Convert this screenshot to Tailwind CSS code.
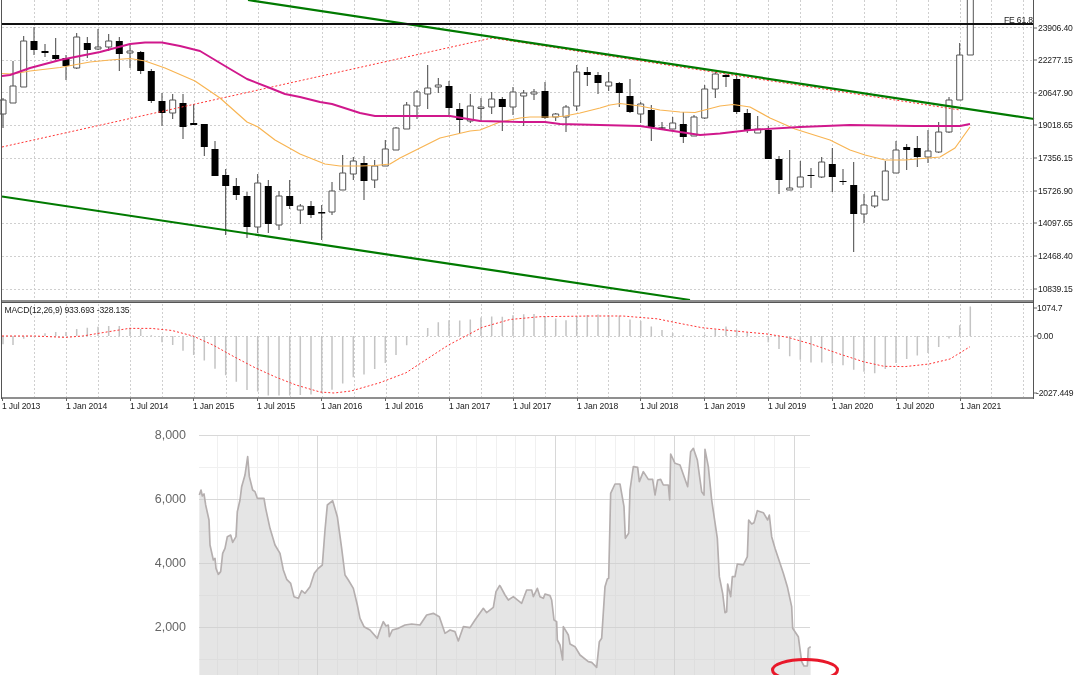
<!DOCTYPE html>
<html>
<head>
<meta charset="utf-8">
<script src="https://cdn.jsdelivr.net/npm/@tailwindcss/browser@4"></script>
</head>
<body class="bg-white">
<div class="flex flex-col w-[1080px] h-[675px] overflow-hidden bg-white font-['Liberation_Sans',sans-serif]">

<svg class="block w-[1080px] h-[420px] shrink-0 blur-[0.35px]" viewBox="0 0 1080 420" fill="none">
  <!-- grid -->
  <path stroke="#cfcfcf" stroke-dasharray="2 2" d="M34.5 0V398M66.5 0V398M98.5 0V398M130.5 0V398M162.5 0V398M194.5 0V398M226.5 0V398M258.5 0V398M290.5 0V398M322.5 0V398M354.5 0V398M386.5 0V398M418.5 0V398M449.5 0V398M481.5 0V398M513.5 0V398M545.5 0V398M577.5 0V398M608.5 0V398M640.5 0V398M672.5 0V398M704.5 0V398M736.5 0V398M768.5 0V398M800.5 0V398M832.5 0V398M864.5 0V398M896.5 0V398M928.5 0V398M960.5 0V398M991.5 0V398M1023.5 0V398M2 27.5H1034M2 60.5H1034M2 92.5H1034M2 125.5H1034M2 158.5H1034M2 191.5H1034M2 223.5H1034M2 256.5H1034M2 289.5H1034M2 336.5H1034"/>

  <!-- wicks -->
  <path stroke="#444" d="M3 98V128M13 61V103M23.7 36V87M34 27V55M45 44V57M55.7 38V60M66 55V80M76.7 33V69M87.3 37V58M98 29V50M108.7 34V51M119.3 37V71M130 45V68M140.7 51V74M151.3 69V103M162 93V126M172.7 94V119M183 94V139M193.7 104V124M204.3 124V156M215 141V176M225.7 169V235M236.3 178V200M247 192V238M257.7 174V233M268.3 180V233M279 191V230M289.7 180V209M300.3 204V224M311 201V218M321.7 205V240M332 182V215M342.7 155V190M353.3 157V180M364 156V200M374.7 160V188M385.3 140V166M396 127V150M406.7 102V129M417 90V119M427.7 65V109M438.3 78V93M449 81V115M459.7 103V133M470.3 94V123M481 98V121M491.7 92V114M502.3 97V131M513 87V115M523.7 90V126M534 89V100M545 82V119M555.7 113V121M566 105V132M576.7 65V111M587.3 67V86M598 72V94M608.7 72V91M619.3 82V107M630 79V113M640.7 102V123M651.3 105V141M662 122V129M672.7 117V129M683.3 112V143M694 115V136M704.7 85V119M715.3 72V98M726 74V87M736.7 76V114M747.3 109V133M757.7 116V133M768.3 126V159M779 156V194M789.7 150V190M800.3 161V187M811 168V188M821.7 157V178M832.3 148V192M843 169V185M853.7 162V252M864 194V223M874.7 191V208M885.3 161V200M896 141V173M906.7 144V170M917.3 136V167M928 130V163M938.7 122V153M949 97V133M959.7 43V100M970.3 0V55"/>

  <!-- white bodies -->
  <path fill="#fff" stroke="#555" d="M0 100h6V114h-6zM10 86h6V103h-6zM20.7 41h6V87h-6zM73.7 37h6V68h-6zM95 47h6V49h-6zM105.7 41h6V47h-6zM127 51h6V53h-6zM169.7 100h6V113h-6zM254.7 183h6V227h-6zM276 196h6V225h-6zM297.3 206h6V210h-6zM329 191h6V212h-6zM339.7 173h6V190h-6zM350.3 161h6V174h-6zM371.7 166h6V180h-6zM382.3 149h6V166h-6zM393 128h6V150h-6zM403.7 105h6V129h-6zM414 92h6V106h-6zM424.7 88h6V94h-6zM435.3 85h6V87h-6zM467.3 106h6V121h-6zM478 107h6V108.5h-6zM488.7 99h6V107h-6zM510 92h6V107h-6zM520.7 93h6V96h-6zM531 92h6V94h-6zM552.7 114h6V117h-6zM563 107h6V117h-6zM573.7 72h6V106h-6zM605.7 82h6V86h-6zM637.7 104h6V114h-6zM669.7 123h6V129h-6zM691 117h6V136h-6zM701.7 89h6V118h-6zM712.3 74h6V89h-6zM754.7 129h6V133h-6zM786.7 188h6V190h-6zM797.3 177h6V187h-6zM818.7 162h6V177h-6zM861 205h6V214h-6zM871.7 196h6V206h-6zM882.3 171h6V200h-6zM893 150h6V173h-6zM925 151h6V157h-6zM935.7 132h6V152h-6zM946 100h6V132h-6zM956.7 55h6V100h-6zM967.3 -2h6V55h-6z"/>

  <!-- black bodies -->
  <path stroke="#000" stroke-width="7" d="M34 41V50M45 51V53M55.7 55V59M66 58V66M87.3 43V50M119.3 41V54M140.7 52V71M151.3 71V101M162 101V113M183 103V127M193.7 123V125M204.3 124V147M215 149V176M225.7 175V186M236.3 186V195M247 196V227M268.3 186V224M289.7 196V206M311 206V215M321.7 212V213.5M364 163V181M449 86V108M459.7 109V120M502.3 99V107M545 91V118M587.3 72V75M598 75V83M619.3 83V93M630 96V112M651.3 110V127M662 127.5V128.5M683.3 124V137M726 75V77M736.7 79V112M747.3 113V131M768.3 130V159M779 159V180M811 175V176M832.3 164V177M843 181V182M853.7 185V214M906.7 147V150M917.3 148V157"/>

  <!-- channel and levels -->
  <path stroke="#f33" stroke-dasharray="2 2" d="M2 147L492 38L960 110"/>
  <path stroke="#007a00" stroke-width="2.2" d="M248 0L1034 119M2 196.5L690 300"/>
  <path stroke="#111" stroke-width="2" d="M2 24H1034"/>

  <!-- moving averages -->
  <path stroke="#f8b452" stroke-width="1.2" stroke-linejoin="round" d="M2 73.5L12 74L30 71L60 67.5L90 62L110 60L130 58.5L145 61L165 68L195 81L220 98L247 122L258 127L275 140L300 154L325 164L340 166L360 166L375 165.5L390 164L400 158L420 148L440 138L470 131L480 130L500 122L520 118L530 117L555 117L565 116L580 113L600 108L610 105L620 103.5L640 106L660 110L680 112L695 112.5L720 106L733 104.5L750 107L770 118L795 129L830 140L850 150L865 155L885 160L905 160L940 157L955 148L970 127"/>
  <path stroke="#d0188c" stroke-width="1.9" stroke-linejoin="round" d="M2 76L10 75L30 68L60 60L100 52L130 44L145 42.5L162 42.5L180 46L200 51L225 66L247 79L270 88L285 94L300 97L320 102L332 104L360 113L375 116L450 116L480 121L520 122L545 122L560 124L600 125L640 126L660 129L680 132L700 135L720 133.5L750 130L800 127L850 125L915 126L960 126L970 124"/>

  <!-- MACD histogram -->
  <path stroke="#c4c4c4" stroke-width="1.5" d="M3 336V344.3M13 336V345M23.7 336V338.8M34 336V336.7M45 336V333.2M55.7 336V331.9M66 336V331.9M76.7 336V329.1M87.3 336V327.7M98 336V326.7M108.7 336V326M119.3 336V326M130 336V327.7M140.7 336V329.1M151.3 336V335.3M162 336V342.2M172.7 336V345M183 336V350.8M193.7 336V354.9M204.3 336V360.4M215 336V368.7M225.7 336V375.3M236.3 336V381.8M247 336V390M257.7 336V391.4M268.3 336V395.6M279 336V395.6M289.7 336V395.6M300.3 336V394.9M311 336V394.5M321.7 336V393.2M332 336V389.7M342.7 336V383.5M353.3 336V377.3M364 336V374.6M374.7 336V369M385.3 336V362.9M396 336V354.9M406.7 336V345.3M417 336V336.7M427.7 336V328M438.3 336V322.2M449 336V320.2M459.7 336V320.5M470.3 336V319.5M481 336V317.4M491.7 336V316.4M502.3 336V316.7M513 336V315.3M523.7 336V314.3M534 336V314M545 336V316.7M555.7 336V318.4M566 336V320.2M576.7 336V316.7M587.3 336V315M598 336V314.6M608.7 336V315.3M619.3 336V315.7M630 336V319.5M640.7 336V320.9M651.3 336V326.4M662 336V330.1M672.7 336V332.9M683.3 336V335.3M694 336V335.7M704.7 336V334.6M715.3 336V329.5M726 336V326.4M736.7 336V329.8M747.3 336V332.6M768.3 336V342.2M779 336V349.1M789.7 336V356.3M800.3 336V359.8M811 336V362.5M821.7 336V362.5M832.3 336V363.5M843 336V365.3M853.7 336V369.7M864 336V371.8M874.7 336V373.2M885.3 336V369M896 336V362.9M906.7 336V359.1M917.3 336V355.6M928 336V352.9M938.7 336V347M949 336V338.4M959.7 336V325.3M970.3 336V306.4"/>
  <path stroke="#f33" stroke-dasharray="2 2" d="M2 336L34.4 336L65.4 337.4L82.6 336L103 332.6L129 328.4L151.5 328.4L172 330.5L193 336L213.5 345.3L234 356.7L255 367.7L275.5 377L296 385L320 392L334 393L351 391L379 383L406 372.8L427 359L448 345.3L482 327.4L510 319.5L540 316.7L591.7 316L622.6 316L657 318.8L677.7 323L702 327.7L733 330.8L767 334L788 337.4L812 344.3L839.6 354L863.7 361.8L884 366.3L905 366.6L929 364L950 359L970 346.7"/>

  <!-- frame -->
  <path stroke="#8f8f8f" stroke-width="2" d="M1 301H1034M1 398H1034"/>
  <path stroke="#555" d="M1.5 0V399M1033.5 0V399M2 302.5H1034"/>
  <path stroke="#666" d="M1034 28H1037M1034 60H1037M1034 93H1037M1034 125H1037M1034 158H1037M1034 191H1037M1034 223H1037M1034 256H1037M1034 289H1037M1034 308H1037M1034 336H1037M1034 393H1037M2.5 398V401M66.5 398V401M130.5 398V401M193.5 398V401M257.5 398V401M321.5 398V401M385.5 398V401M449.5 398V401M513.5 398V401M577.5 398V401M640.5 398V401M704.5 398V401M768.5 398V401M832.5 398V401M896.5 398V401M960.5 398V401"/>

  <!-- labels -->
  <g class="fill-[#222] text-[8.6px] tracking-[-0.15px]" dominant-baseline="central">
    <text x="1038" y="28">23906.40</text>
    <text x="1038" y="60">22277.15</text>
    <text x="1038" y="93">20647.90</text>
    <text x="1038" y="125">19018.65</text>
    <text x="1038" y="158">17356.15</text>
    <text x="1038" y="191">15726.90</text>
    <text x="1038" y="223">14097.65</text>
    <text x="1038" y="256">12468.40</text>
    <text x="1038" y="289">10839.15</text>
    <text x="1037" y="308">1074.7</text>
    <text x="1037" y="336">0.00</text>
    <text x="1036" y="393">-2027.449</text>
    <text x="1033" y="19.5" text-anchor="end">FE 61.8</text>
    <text x="4.5" y="310">MACD(12,26,9) 933.693 -328.135</text>
    <text x="2" y="405.5">1 Jul 2013</text>
    <text x="66" y="405.5">1 Jan 2014</text>
    <text x="130" y="405.5">1 Jul 2014</text>
    <text x="193" y="405.5">1 Jan 2015</text>
    <text x="257" y="405.5">1 Jul 2015</text>
    <text x="321" y="405.5">1 Jan 2016</text>
    <text x="385" y="405.5">1 Jul 2016</text>
    <text x="449" y="405.5">1 Jan 2017</text>
    <text x="513" y="405.5">1 Jul 2017</text>
    <text x="577" y="405.5">1 Jan 2018</text>
    <text x="640" y="405.5">1 Jul 2018</text>
    <text x="704" y="405.5">1 Jan 2019</text>
    <text x="768" y="405.5">1 Jul 2019</text>
    <text x="832" y="405.5">1 Jan 2020</text>
    <text x="896" y="405.5">1 Jul 2020</text>
    <text x="960" y="405.5">1 Jan 2021</text>
  </g>
</svg>

<svg class="block w-[1080px] h-[255px] shrink-0 blur-[0.3px]" viewBox="0 420 1080 255" fill="none">
  <path stroke="#f0f0f0" d="M217.5 435V675M237.5 435V675M257.5 435V675M278.5 435V675M298.5 435V675M337.5 435V675M357.5 435V675M376.5 435V675M396.5 435V675M416.5 435V675M456.5 435V675M476.5 435V675M496.5 435V675M515.5 435V675M535.5 435V675M575.5 435V675M595.5 435V675M615.5 435V675M634.5 435V675M654.5 435V675M694.5 435V675M714.5 435V675M734.5 435V675M754.5 435V675M774.5 435V675M199 467.5H810M199 531.5H810M199 595.5H810M199 659.5H810"/>
  <path stroke="#d8d8d8" d="M317.5 435V675M436.5 435V675M555.5 435V675M674.5 435V675M794.5 435V675M199 435.5H810M199 499.5H810M199 563.5H810M199 627.5H810"/>

  <g transform="translate(140 420) scale(0.33333)">
    <path fill="#cfcfcf" fill-opacity="0.55" d="M178 225L183 210L187 228L192 222L197 255L207 300L210 375L220 420L225 415L228 445L235 463L242 455L248 400L255 385L262 350L272 345L278 367L288 350L292 275L300 240L305 200L315 165L323 110L328 170L338 210L345 215L352 235L372 235L377 265L390 325L405 375L420 400L430 450L440 478L452 490L462 530L475 535L485 512L495 520L510 500L523 460L535 445L547 435L555 330L562 255L578 242L592 290L605 385L615 465L625 480L640 505L652 555L660 595L672 620L690 630L712 655L720 630L730 605L738 618L745 615L748 650L757 630L775 625L795 615L815 612L840 615L860 585L880 580L898 590L915 640L930 630L945 635L955 663L970 620L990 623L1005 600L1030 565L1040 578L1060 562L1068 515L1080 495V765H178Z"/>
    <path stroke="#b5afaf" stroke-width="5" stroke-linejoin="round" d="M178 225L183 210L187 228L192 222L197 255L207 300L210 375L220 420L225 415L228 445L235 463L242 455L248 400L255 385L262 350L272 345L278 367L288 350L292 275L300 240L305 200L315 165L323 110L328 170L338 210L345 215L352 235L372 235L377 265L390 325L405 375L420 400L430 450L440 478L452 490L462 530L475 535L485 512L495 520L510 500L523 460L535 445L547 435L555 330L562 255L578 242L592 290L605 385L615 465L625 480L640 505L652 555L660 595L672 620L690 630L712 655L720 630L730 605L738 618L745 615L748 650L757 630L775 625L795 615L815 612L840 615L860 585L880 580L898 590L915 640L930 630L945 635L955 663L970 620L990 623L1005 600L1030 565L1040 578L1060 562L1068 515L1080 495"/>
  </g>
  <g transform="translate(500 420) scale(0.33333)">
    <path fill="#cfcfcf" fill-opacity="0.55" d="M0 497L15 525L25 540L40 530L65 550L80 510L95 510L100 530L112 505L120 530L130 535L135 522L150 527L155 540L162 600L170 605L172 660L180 675L188 720L190 620L205 645L210 672L225 680L240 705L265 725L275 727L290 742L298 665L305 655L315 500L322 477L326 475L332 220L345 192L360 192L372 260L376 355L386 340L390 210L400 140L413 142L418 185L430 155L445 178L458 178L465 225L473 180L482 178L490 195L505 195L509 240L512 102L525 130L540 135L563 200L572 95L580 85L592 120L605 215L612 225L615 88L625 140L635 240L652 355L658 470L668 520L675 578L680 575L683 492L692 530L697 470L705 470L712 432L730 435L742 410L746 300L755 312L762 308L772 272L790 278L803 300L808 285L815 350L825 385L840 430L850 460L862 500L875 560L878 625L895 650L905 725L912 738L922 738L925 685L932 680V765H0Z"/>
    <path stroke="#b5afaf" stroke-width="5" stroke-linejoin="round" d="M0 497L15 525L25 540L40 530L65 550L80 510L95 510L100 530L112 505L120 530L130 535L135 522L150 527L155 540L162 600L170 605L172 660L180 675L188 720L190 620L205 645L210 672L225 680L240 705L265 725L275 727L290 742L298 665L305 655L315 500L322 477L326 475L332 220L345 192L360 192L372 260L376 355L386 340L390 210L400 140L413 142L418 185L430 155L445 178L458 178L465 225L473 180L482 178L490 195L505 195L509 240L512 102L525 130L540 135L563 200L572 95L580 85L592 120L605 215L612 225L615 88L625 140L635 240L652 355L658 470L668 520L675 578L680 575L683 492L692 530L697 470L705 470L712 432L730 435L742 410L746 300L755 312L762 308L772 272L790 278L803 300L808 285L815 350L825 385L840 430L850 460L862 500L875 560L878 625L895 650L905 725L912 738L922 738L925 685L932 680"/>
  </g>

  <ellipse cx="805" cy="670" rx="32.5" ry="10.5" stroke="#e8182a" stroke-width="3"/>

  <g class="fill-[#666] text-[12.5px]" text-anchor="end" dominant-baseline="central">
    <text x="186" y="435">8,000</text>
    <text x="186" y="499">6,000</text>
    <text x="186" y="563">4,000</text>
    <text x="186" y="627">2,000</text>
  </g>
</svg>

</div>
</body>
</html>
